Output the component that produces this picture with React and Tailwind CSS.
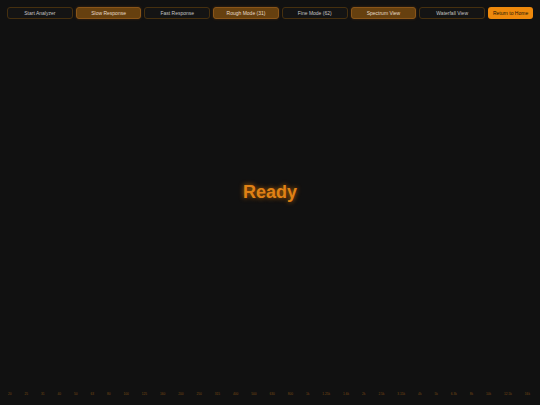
const buttons = [
  ["Start Analyzer", false],
  ["Slow Response", true],
  ["Fast Response", false],
  ["Rough Mode (31)", true],
  ["Fine Mode (62)", false],
  ["Spectrum View", true],
  ["Waterfall View", false],
];
const freqs = ["20","25","31","40","50","63","80","100","125","160","200","250","315","400","500","630","800","1k","1.25k","1.6k","2k","2.5k","3.15k","4k","5k","6.3k","8k","10k","12.5k","16k"];

export default function App() {
  return (
    <div className="flex h-[405px] w-[540px] flex-col overflow-hidden bg-[#111111] font-['Liberation_Sans',Arial,sans-serif]">
      <div className="flex gap-[3px] px-[7px] pt-[7px]">
        {buttons.map(([label, active]) => (
          <div
            key={label}
            className={
              active
                ? "flex h-3 flex-1 items-center justify-center rounded-[3px] border border-[#8a5518] bg-[#66400f] pt-px text-[5px] font-medium text-[#e6dccb] shadow-[0_0_3px_rgba(255,136,0,0.2)]"
                : "flex h-3 flex-1 items-center justify-center rounded-[3px] border border-[#46300f] bg-[#141414] pt-px text-[5px] text-[#c4c4c4]"
            }
          >
            {label}
          </div>
        ))}
        <div className="flex h-3 w-[45px] items-center justify-center rounded-[3px] bg-[#ee890c] pt-px text-[5px] text-[#221505]">
          Return to Home
        </div>
      </div>
      <div className="flex flex-1 items-center justify-center pb-[26px]">
        <span className="text-[18px] font-bold text-[#df8115] [text-shadow:0_0_5px_rgba(255,136,0,0.7)]">Ready</span>
      </div>
      <div className="flex items-center justify-between pb-[9px] pl-[8px] pr-[10px]">
        {freqs.map((f) => (
          <span key={f} className="text-[3.2px] leading-[4px] text-[#7a4a14]">{f}</span>
        ))}
      </div>
    </div>
  );
}
